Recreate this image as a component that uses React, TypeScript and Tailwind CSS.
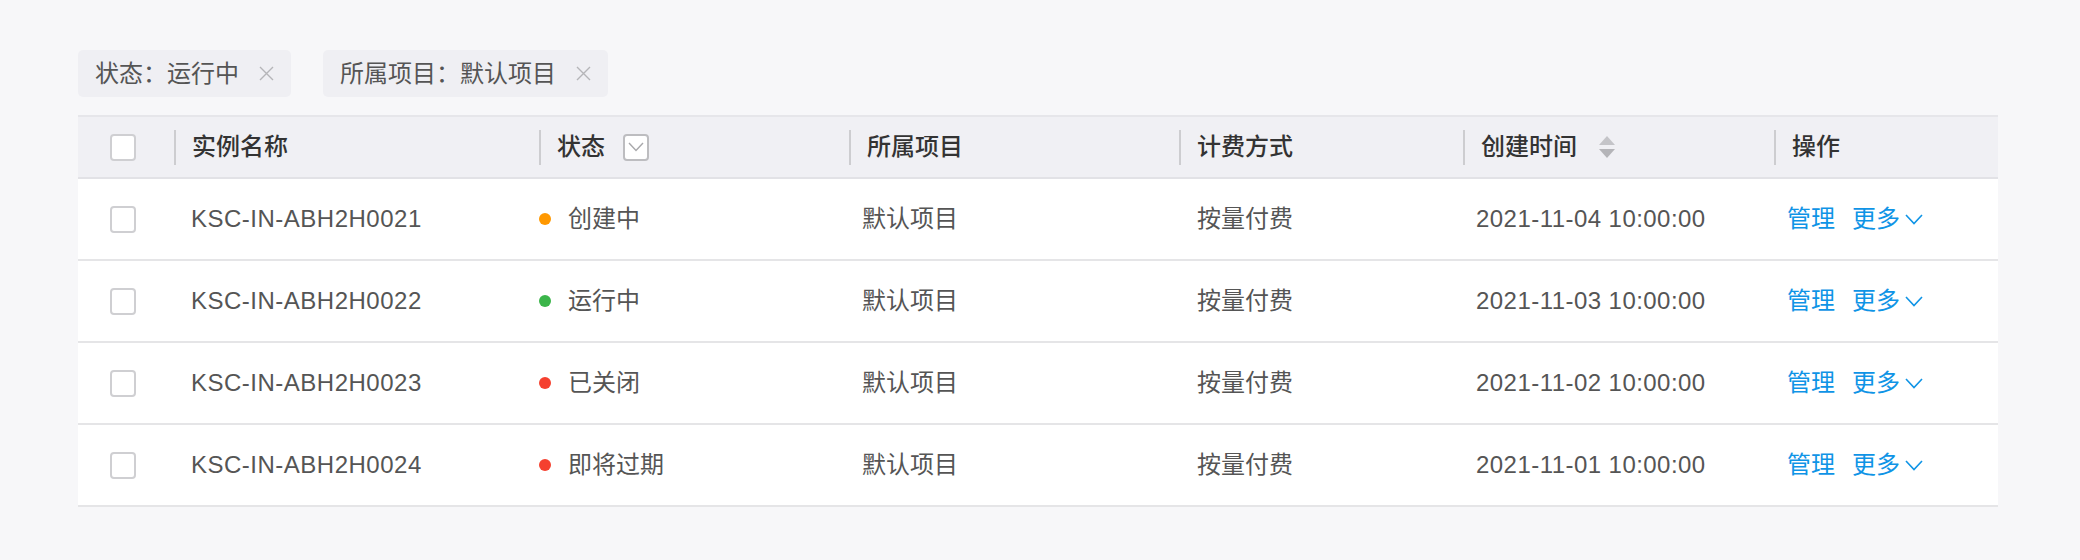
import { useState } from "react";

type Row = {
  id: string;
  status: string;
  dot: string;
  project: string;
  billing: string;
  created: string;
};

const ROWS: Row[] = [
  { id: "KSC-IN-ABH2H0021", status: "创建中", dot: "bg-[#ff9800]", project: "默认项目", billing: "按量付费", created: "2021-11-04 10:00:00" },
  { id: "KSC-IN-ABH2H0022", status: "运行中", dot: "bg-[#3bb54a]", project: "默认项目", billing: "按量付费", created: "2021-11-03 10:00:00" },
  { id: "KSC-IN-ABH2H0023", status: "已关闭", dot: "bg-[#f5402f]", project: "默认项目", billing: "按量付费", created: "2021-11-02 10:00:00" },
  { id: "KSC-IN-ABH2H0024", status: "即将过期", dot: "bg-[#f5402f]", project: "默认项目", billing: "按量付费", created: "2021-11-01 10:00:00" },
];

const COLS = "grid grid-cols-[96px_365px_310px_330px_284px_311px_224px]";
const FONT = "font-['Liberation_Sans','Noto_Sans_CJK_SC',sans-serif]";

function Checkbox() {
  return <span className="ml-8 block h-[27px] w-[26px] rounded-[4px] border-2 border-[#cfcfd2] bg-white" />;
}

function Tag({ label }: { label: string }) {
  return (
    <div className="flex h-[47px] items-center gap-[20px] rounded-[5px] bg-[#efeff3] pl-[17px] pr-[17px] text-[24px] text-[#555]">
      <span>{label}</span>
      <svg width="15" height="15" viewBox="0 0 15 15" className="text-[#b5b5b8]">
        <path d="M1 1 L14 14 M14 1 L1 14" stroke="currentColor" strokeWidth="1.4" />
      </svg>
    </div>
  );
}

function HeadCell({ children }: { children: React.ReactNode }) {
  return (
    <div className="flex items-center">
      <span className="h-[35px] w-[2px] bg-[#cdcdd0]" />
      <div className="flex items-center pl-[16px]">{children}</div>
    </div>
  );
}

function Chevron({ className }: { className?: string }) {
  return (
    <svg width="18" height="11" viewBox="0 0 18 11" className={className}>
      <path d="M1 1 L9 9.5 L17 1" fill="none" stroke="currentColor" strokeWidth="1.6" />
    </svg>
  );
}

export default function App() {
  const [rows] = useState(ROWS);

  return (
    <div className={`h-[560px] w-[2080px] bg-[#f7f7f9] pl-[78px] pt-[50px] ${FONT}`}>
      <div className="flex gap-[32px]">
        <Tag label="状态：运行中" />
        <Tag label="所属项目：默认项目" />
      </div>

      <div className="mt-[18px] w-[1920px]">
        {/* header */}
        <div className={`${COLS} h-[64px] border-y-2 border-t-[#e6e6ea] border-b-[#e2e2e6] bg-[#f0f0f4] text-[24px] font-medium text-[#333]`}>
          <div className="flex items-center">
            <Checkbox />
          </div>
          <HeadCell>实例名称</HeadCell>
          <HeadCell>
            状态
            <span className="ml-[18px] flex h-[27px] w-[26px] items-center justify-center rounded-[4px] border-2 border-[#bdbdc0] bg-white text-[#a8a8ab]">
              <svg width="16" height="10" viewBox="0 0 16 10">
                <path d="M1 1 L8 8.5 L15 1" fill="none" stroke="currentColor" strokeWidth="1.4" />
              </svg>
            </span>
          </HeadCell>
          <HeadCell>所属项目</HeadCell>
          <HeadCell>计费方式</HeadCell>
          <HeadCell>
            创建时间
            <svg width="16" height="22" viewBox="0 0 16 22" className="ml-[22px]">
              <path d="M8 0 L16 9 L0 9 Z" fill="#c4c4c8" />
              <path d="M0 13 L16 13 L8 22 Z" fill="#b4b4b8" />
            </svg>
          </HeadCell>
          <HeadCell>操作</HeadCell>
        </div>

        {/* body */}
        {rows.map((r) => (
          <div key={r.id} className={`${COLS} h-[82px] border-b-2 border-[#e5e5e7] bg-white text-[24px] text-[#555]`}>
            <div className="flex items-center">
              <Checkbox />
            </div>
            <div className="flex items-center pl-[17px] tracking-[0.5px]">{r.id}</div>
            <div className="flex items-center">
              <span className={`h-[12px] w-[12px] rounded-full ${r.dot}`} />
              <span className="ml-[17px]">{r.status}</span>
            </div>
            <div className="flex items-center pl-[13px]">{r.project}</div>
            <div className="flex items-center pl-[18px]">{r.billing}</div>
            <div className="flex items-center pl-[13px] tracking-[0.45px]">{r.created}</div>
            <div className="flex items-center pl-[13px] text-[#0f94e6]">
              <span>管理</span>
              <span className="ml-[17px]">更多</span>
              <Chevron className="ml-[5px]" />
            </div>
          </div>
        ))}
      </div>
    </div>
  );
}
